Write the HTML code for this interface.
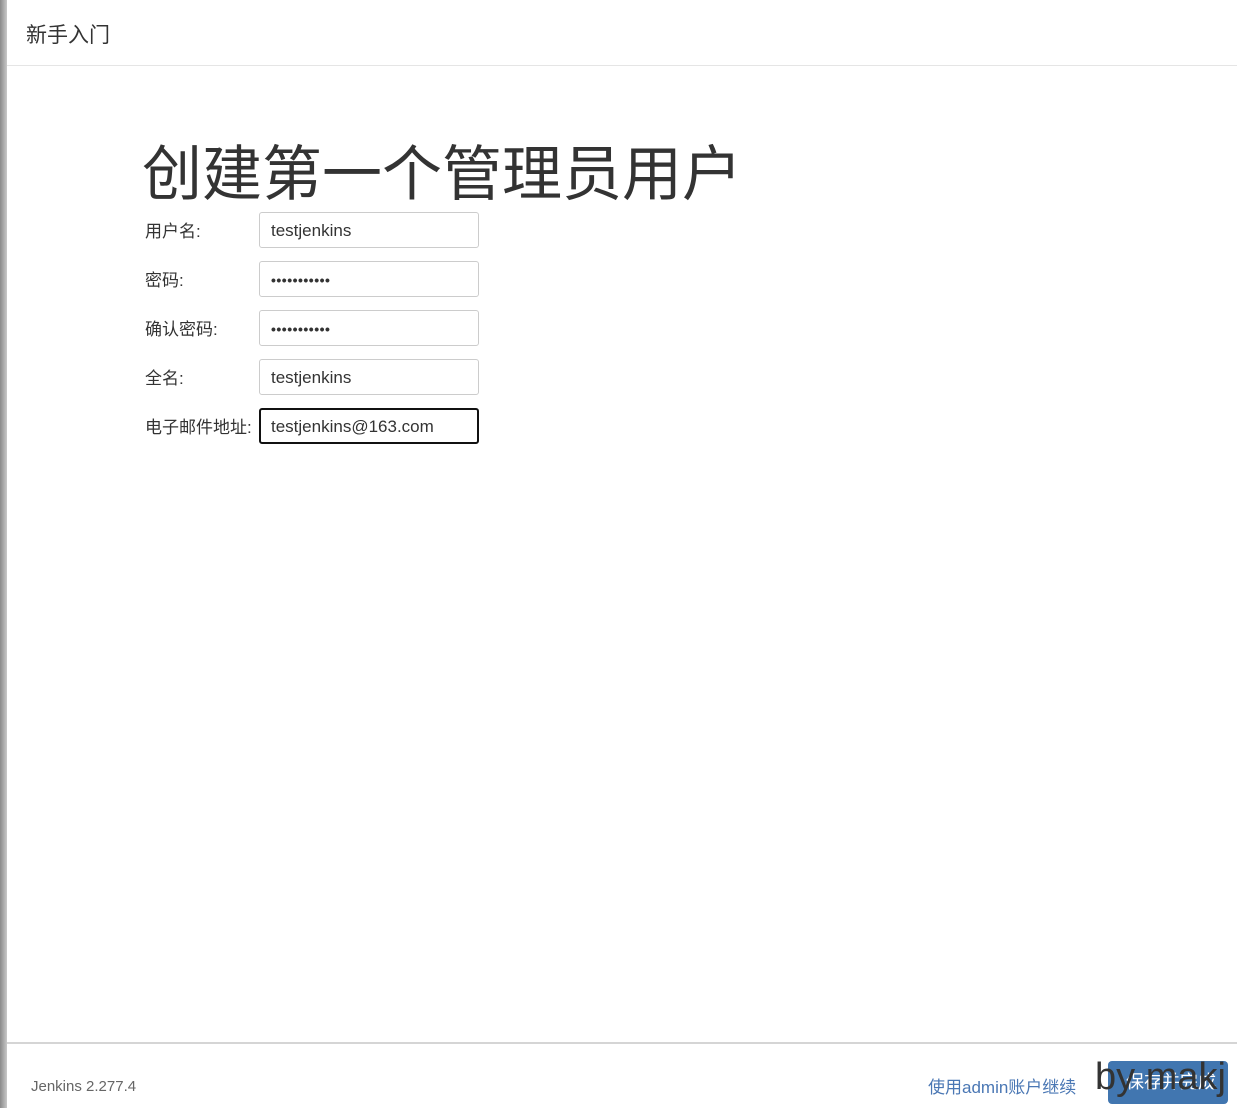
<!DOCTYPE html>
<html style="overflow:hidden;height:1108px"><head><meta charset="utf-8">
<style>
*{margin:0;padding:0;box-sizing:border-box}
body{width:1237px;height:1108px;background:#fff;position:relative;overflow:hidden;font-family:"Liberation Sans","Noto Sans CJK SC",sans-serif;color:#333}
.shadow{position:absolute;left:0;top:0;width:7px;height:1108px;background:linear-gradient(to right,#8a8a8a,#c8c8c8)}
.hdr{position:absolute;left:26px;top:19px;font-size:21px;color:#333}
.hline{position:absolute;left:7px;right:0;top:65px;height:1px;background:#e5e5e5}
h1{position:absolute;left:142px;top:135px;font-size:60px;font-weight:normal;color:#333;line-height:80px;white-space:nowrap}
.lbl{position:absolute;left:145px;font-size:17px;color:#333;white-space:nowrap}
.inp{position:absolute;left:259px;width:220px;height:36px;border:1px solid #ccc;border-radius:3px;padding-left:11px;font-size:17px;line-height:36px;color:#333}
.pw{font-size:14px;letter-spacing:0.5px;font-weight:bold}
.focus{border:2px solid #111;padding-left:10px;line-height:34px}
.fline{position:absolute;left:7px;right:0;top:1042px;height:2px;background:#d5d5d5}
.ver{position:absolute;left:31px;top:1078px;font-size:15px;color:#666}
.link{position:absolute;left:928px;top:1073px;font-size:17px;color:#4a77b4;white-space:nowrap}
.btn{position:absolute;left:1108px;top:1061px;width:120px;height:43px;background:#4176b0;border-radius:4px;color:#fff;font-size:18px;line-height:43px;padding-left:18px;white-space:nowrap}
.wm{position:absolute;left:1095px;top:1052px;font-size:38px;color:#333;line-height:50px;white-space:nowrap}
</style></head><body>
<div class="shadow"></div>
<div class="hdr">新手入门</div>
<div class="hline"></div>
<h1>创建第一个管理员用户</h1>
<div class="lbl" style="top:217px">用户名:</div>
<div class="inp" style="top:212px">testjenkins</div>
<div class="lbl" style="top:266px">密码:</div>
<div class="inp pw" style="top:261px">•••••••••••</div>
<div class="lbl" style="top:315px">确认密码:</div>
<div class="inp pw" style="top:310px">•••••••••••</div>
<div class="lbl" style="top:364px">全名:</div>
<div class="inp" style="top:359px">testjenkins</div>
<div class="lbl" style="top:413px">电子邮件地址:</div>
<div class="inp focus" style="top:408px">testjenkins@163.com</div>
<div class="fline"></div>
<div class="ver">Jenkins 2.277.4</div>
<div class="link">使用admin账户继续</div>
<div class="btn">保存并完成</div>
<div class="wm">by makj</div>
</body></html>
